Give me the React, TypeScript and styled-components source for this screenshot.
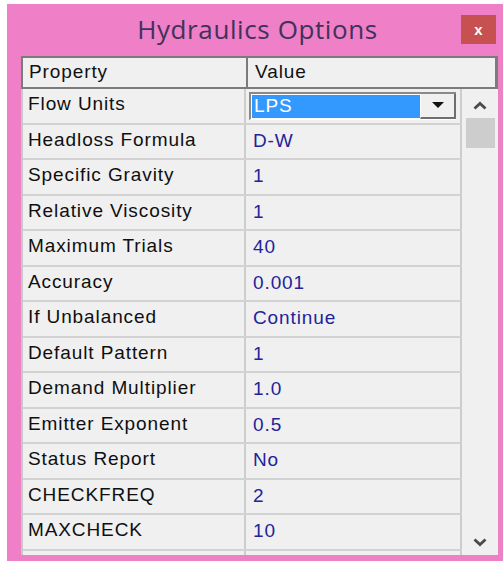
import React from 'react';
import styled, { createGlobalStyle } from 'styled-components';

const GlobalStyle = createGlobalStyle`
  html, body {
    margin: 0;
    padding: 0;
    background: #ffffff;
  }
`;

const Window = styled.div`
  margin: 4px 0 0 7px;
  width: 496px;
  height: 557px;
  background: #ef7fc6;
  box-sizing: border-box;
  padding: 0 5px 6px 14px;
  display: flex;
  flex-direction: column;
`;

const TitleBar = styled.div`
  position: relative;
  flex-shrink: 0;
  height: 52px;
  display: flex;
  align-items: center;
  justify-content: center;
  padding-right: 4px;
`;

const Title = styled.div`
  font-family: 'Open Sans', 'Noto Sans', sans-serif;
  font-size: 26px;
  color: #40325a;
  letter-spacing: 0.6px;
  margin-top: -3px;
`;

const CloseButton = styled.div`
  position: absolute;
  right: 2px;
  top: 11px;
  width: 35px;
  height: 29px;
  background: #c75050;
  color: #ffffff;
  font-family: 'Liberation Sans', Arial, sans-serif;
  font-weight: bold;
  font-size: 15px;
  display: flex;
  align-items: center;
  justify-content: center;
`;

const Grid = styled.div`
  flex: 1;
  min-height: 0;
  overflow: hidden;
  display: flex;
  flex-direction: column;
  background: #f0f0f0;
  font-family: 'Liberation Sans', Arial, sans-serif;
  font-size: 19px;
  letter-spacing: 0.9px;
`;

const Header = styled.div`
  flex-shrink: 0;
  display: grid;
  grid-template-columns: 225px 1fr;
  height: 33px;
  box-sizing: border-box;
  border: 2px solid #7b7b7b;
  border-right-width: 3px;
`;

const HeaderCell = styled.div<{ $divider?: boolean }>`
  display: flex;
  align-items: center;
  padding-left: ${(p) => (p.$divider ? '6px' : '7px')};
  padding-bottom: 2px;
  color: #111111;
  border-right: ${(p) => (p.$divider ? '2px solid #7b7b7b' : 'none')};
`;

const Body = styled.div`
  flex: 1;
  display: flex;
  min-height: 0;
`;

const Rows = styled.div`
  width: 441px;
  border-left: 2px solid #c8c8c8;
  overflow: hidden;
`;

const Row = styled.div`
  display: grid;
  grid-template-columns: 223px 1fr;
  height: 35.5px;
  box-sizing: border-box;
  border-bottom: 2px solid #d2d2d2;
`;

const NameCell = styled.div`
  display: flex;
  align-items: center;
  padding: 0 0 3px 5px;
  color: #0f0f0f;
  border-right: 2px solid #cdcdcd;
  white-space: nowrap;
`;

const ValueCell = styled.div`
  display: flex;
  align-items: center;
  padding: 0 0 1px 7px;
  color: #23239a;
  border-right: 2px solid #cdcdcd;
`;

const Combo = styled.div`
  display: flex;
  align-items: stretch;
  margin: 2px 4px 1px -4px;
  width: 207px;
  height: 28px;
  box-sizing: border-box;
  border-top: 2px solid #8a8a8a;
  border-left: 2px solid #8a8a8a;
  border-bottom: 1px solid #ffffff;
  background: #ffffff;
`;

const Selected = styled.div`
  flex: 1;
  display: flex;
  align-items: center;
  padding-left: 2px;
  background: #3399ff;
  color: #ffffff;
  outline: 1px dotted #c07820;
  outline-offset: -1px;
  margin: 1px 0 1px 1px;
`;

const DropButton = styled.div`
  width: 33px;
  display: flex;
  align-items: center;
  justify-content: center;
  background: #f0f0f0;
  border-right: 2px solid #6f6f6f;
  border-bottom: 2px solid #6f6f6f;
  border-left: 1px solid #ffffff;
`;

const ScrollBar = styled.div`
  width: 36px;
  display: flex;
  flex-direction: column;
  align-items: center;
  background: #f0f0f0;
  padding-top: 3px;
`;

const ScrollArrow = styled.div`
  height: 26px;
  display: flex;
  align-items: center;
  justify-content: center;
`;

const Thumb = styled.div`
  width: 29px;
  height: 30px;
  margin-left: 1px;
  background: #cdcdcd;
`;

const Track = styled.div`
  flex: 1;
`;

const Chevron = ({ up }: { up?: boolean }) => (
  <svg width="14" height="9" viewBox="0 0 14 9">
    <path
      d={up ? 'M1.5 7.5 L7 2.5 L12.5 7.5' : 'M1.5 1.5 L7 6.5 L12.5 1.5'}
      fill="none"
      stroke="#4a4a4a"
      strokeWidth="2.8"
    />
  </svg>
);

const rows: [string, string][] = [
  ['Headloss Formula', 'D-W'],
  ['Specific Gravity', '1'],
  ['Relative Viscosity', '1'],
  ['Maximum Trials', '40'],
  ['Accuracy', '0.001'],
  ['If Unbalanced', 'Continue'],
  ['Default Pattern', '1'],
  ['Demand Multiplier', '1.0'],
  ['Emitter Exponent', '0.5'],
  ['Status Report', 'No'],
  ['CHECKFREQ', '2'],
  ['MAXCHECK', '10'],
  ['', ''],
];

const App = () => {
  return (
    <>
      <GlobalStyle />
      <Window>
        <TitleBar>
          <Title>Hydraulics Options</Title>
          <CloseButton>x</CloseButton>
        </TitleBar>
        <Grid>
          <Header>
            <HeaderCell $divider>Property</HeaderCell>
            <HeaderCell>Value</HeaderCell>
          </Header>
          <Body>
            <Rows>
              <Row>
                <NameCell>Flow Units</NameCell>
                <ValueCell>
                  <Combo>
                    <Selected>LPS</Selected>
                    <DropButton>
                      <svg width="12" height="7" viewBox="0 0 12 7">
                        <path d="M0 0 H12 L6 6 Z" fill="#111" />
                      </svg>
                    </DropButton>
                  </Combo>
                </ValueCell>
              </Row>
              {rows.map(([name, value], i) => (
                <Row key={i}>
                  <NameCell>{name}</NameCell>
                  <ValueCell>{value}</ValueCell>
                </Row>
              ))}
            </Rows>
            <ScrollBar>
              <ScrollArrow>
                <Chevron up />
              </ScrollArrow>
              <Thumb />
              <Track />
              <ScrollArrow>
                <Chevron />
              </ScrollArrow>
            </ScrollBar>
          </Body>
        </Grid>
      </Window>
    </>
  );
};

export default App;
